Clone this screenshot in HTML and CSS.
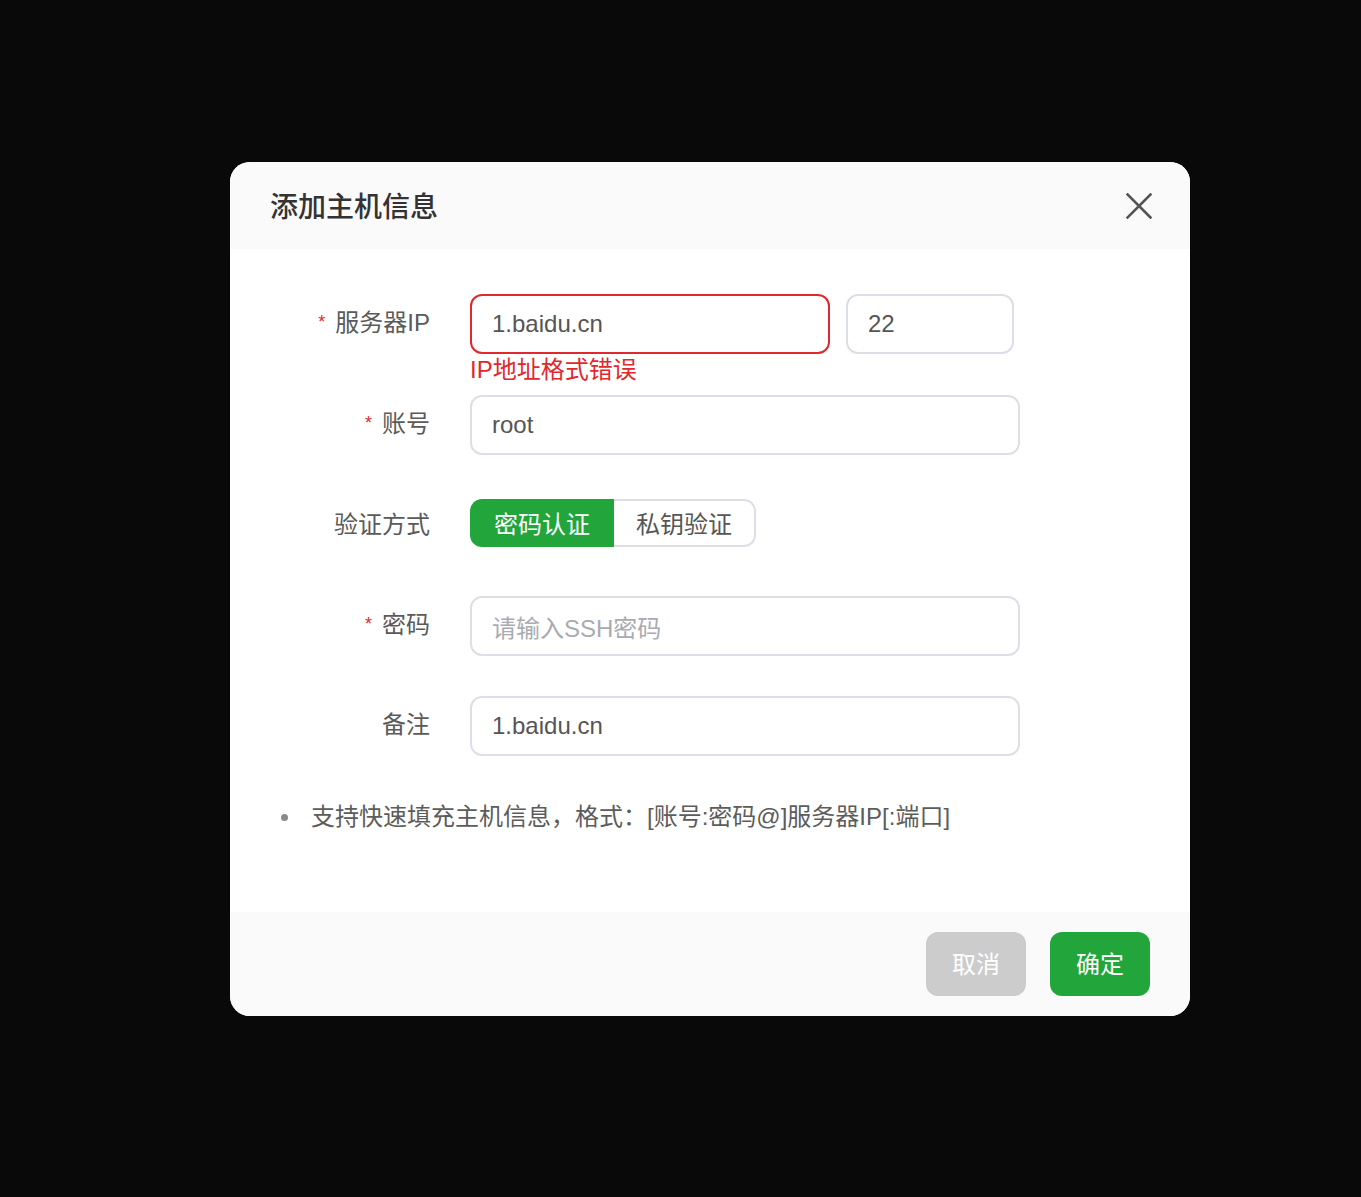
FILE: index.html
```html
<!DOCTYPE html>
<html lang="zh-CN">
<head>
<meta charset="utf-8">
<title>添加主机信息</title>
<link rel="stylesheet" href="styles.css">
</head>
<body>
<div class="dialog">
  <div class="dialog-header">
    <span class="dialog-title">添加主机信息</span>
    <button class="close-btn" aria-label="关闭">
      <svg width="26" height="26" viewBox="0 0 26 26"><path d="M1.5 1.5 L24.5 24.5 M24.5 1.5 L1.5 24.5" stroke="#555" stroke-width="2.6" fill="none" stroke-linecap="square"/></svg>
    </button>
  </div>
  <div class="dialog-body">
    <div class="form-row">
      <label class="form-label"><span class="req">*</span>服务器IP</label>
      <div class="form-field">
        <div class="field-wrap">
          <div class="input input-ip input-error">1.baidu.cn</div>
          <div class="error-msg">IP地址格式错误</div>
        </div>
        <div class="input input-port">22</div>
      </div>
    </div>
    <div class="form-row">
      <label class="form-label"><span class="req">*</span>账号</label>
      <div class="form-field"><div class="input input-wide">root</div></div>
    </div>
    <div class="form-row row-tight">
      <label class="form-label">验证方式</label>
      <div class="form-field">
        <div class="segmented">
          <span class="seg seg-active">密码认证</span>
          <span class="seg">私钥验证</span>
        </div>
      </div>
    </div>
    <div class="form-row row-tight">
      <label class="form-label"><span class="req">*</span>密码</label>
      <div class="form-field"><div class="input input-wide placeholder">请输入SSH密码</div></div>
    </div>
    <div class="form-row row-tight">
      <label class="form-label">备注</label>
      <div class="form-field"><div class="input input-wide">1.baidu.cn</div></div>
    </div>
    <ul class="tips">
      <li>支持快速填充主机信息，格式：[账号:密码@]服务器IP[:端口]</li>
    </ul>
  </div>
  <div class="dialog-footer">
    <button class="btn btn-cancel">取消</button>
    <button class="btn btn-ok">确定</button>
  </div>
</div>
</body>
</html>
```
FILE: styles.css
```css
* { box-sizing: border-box; }
html, body { margin: 0; padding: 0; }
body {
  background: #090909;
  width: 1361px;
  height: 1197px;
  font-family: "Liberation Sans", "Noto Sans CJK SC", sans-serif;
  overflow: hidden;
}
.dialog {
  margin: 162px 0 0 230px;
  width: 960px;
  height: 854px;
  background: #fff;
  border-radius: 20px;
  overflow: hidden;
  display: flex;
  flex-direction: column;
}
.dialog-header {
  height: 87px;
  background: #fafafa;
  display: flex;
  align-items: center;
  justify-content: space-between;
  padding: 0 38px 0 40px;
}
.dialog-title {
  font-family: "Noto Sans CJK SC", sans-serif;
  font-size: 28px;
  font-weight: 500;
  color: #333;
  margin-top: -1px;
}
.close-btn {
  border: 0;
  background: none;
  padding: 0;
  width: 26px;
  height: 26px;
  display: flex;
}
.dialog-body {
  height: 663px;
  padding: 45px 0 0 0;
}
.form-row {
  display: flex;
  align-items: center;
  height: 60px;
  margin-bottom: 41px;
}
.row-tight { margin-bottom: 40px; }
.form-label {
  width: 200px;
  text-align: right;
  font-size: 24px;
  color: #5a5a5a;
  margin-right: 40px;
  line-height: 1;
  position: relative;
  top: -1px;
}
.req {
  color: #e02a2f;
  font-size: 18px;
  margin-right: 10px;
  position: relative;
  top: -3px;
}
.form-field {
  display: flex;
  gap: 16px;
  align-items: center;
}
.field-wrap { position: relative; }
.input {
  height: 60px;
  border: 2px solid #dcdfe6;
  border-radius: 12px;
  padding: 0 20px;
  font-size: 24px;
  color: #555;
  display: flex;
  align-items: center;
}
.input-ip { width: 360px; }
.input-error { border-color: #e0282e; }
.input-port { width: 168px; }
.input-wide { width: 550px; }
.placeholder { color: #a9abb0; }
.error-msg {
  position: absolute;
  left: 0;
  top: 100%;
  margin-top: 0;
  font-size: 24px;
  line-height: 32px;
  color: #e0282e;
  white-space: nowrap;
}
.segmented {
  display: flex;
  height: 48px;
  margin-top: -7px;
}
.seg {
  font-size: 24px;
  color: #555;
  padding: 0 22px;
  display: flex;
  align-items: center;
  border: 2px solid #dcdfe6;
  border-left: 0;
  border-radius: 0 12px 12px 0;
}
.seg-active {
  background: #22a63c;
  color: #fff;
  border: 0;
  border-radius: 12px 0 0 12px;
  padding: 0 24px;
}
.tips {
  margin: 0;
  padding: 5px 0 0 51px;
  list-style: none;
  font-size: 24px;
  color: #5c5c5c;
  line-height: 32px;
}
.tips li {
  display: flex;
  align-items: center;
}
.tips li::before {
  content: "";
  width: 7px;
  height: 7px;
  border-radius: 50%;
  background: #8a8a8a;
  margin-right: 23px;
  flex: none;
}
.dialog-footer {
  height: 104px;
  background: #fafafa;
  display: flex;
  justify-content: flex-end;
  align-items: center;
  gap: 24px;
  padding-right: 40px;
}
.btn {
  width: 100px;
  height: 64px;
  border: 0;
  border-radius: 12px;
  font-family: "Noto Sans CJK SC", sans-serif;
  font-size: 24px;
  color: #fff;
  padding: 0 0 3px;
}
.btn-cancel { background: #cccccc; }
.btn-ok { background: #22a63c; }
```
